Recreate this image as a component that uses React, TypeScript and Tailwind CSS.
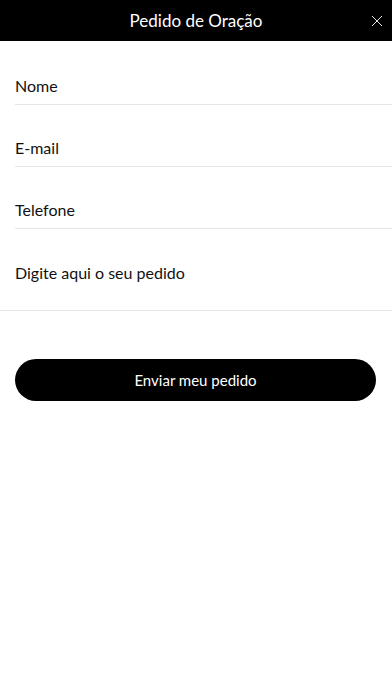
import React from 'react';

const fields = ['Nome', 'E-mail', 'Telefone'];

export default function App() {
  return (
    <div className="min-h-[696px] w-full bg-white text-black" style={{ fontFamily: 'Lato, "Noto Sans", sans-serif' }}>
      <header className="relative flex h-[41px] items-center justify-center bg-black">
        <h1 className="text-[17px] font-normal leading-none text-white">Pedido de Oração</h1>
        <button className="absolute right-[9px] top-[15px] p-0">
          <svg width="12" height="12" viewBox="0 0 12 12" fill="none" stroke="#e5e5e5" strokeWidth="1">
            <path d="M1 1 L11 11 M11 1 L1 11" />
          </svg>
        </button>
      </header>

      <form className="mt-[2px] flex flex-col">
        {fields.map((f) => (
          <div key={f} className="ml-[15px] flex h-[62px] items-end border-b border-[#e6e6e6] pb-[8px]">
            <span className="text-[16px] leading-[20px] text-[#111]">{f}</span>
          </div>
        ))}
        <div className="h-[82px] border-b border-[#e6e6e6] pl-[15px] pt-[32px]">
          <span className="text-[16px] leading-[20px] text-[#111]">Digite aqui o seu pedido</span>
        </div>

        <button
          type="button"
          className="ml-[15px] mr-[16px] mt-[48px] flex h-[42px] items-center justify-center rounded-full bg-black text-[15px] text-white"
        >
          Enviar meu pedido
        </button>
      </form>
    </div>
  );
}
